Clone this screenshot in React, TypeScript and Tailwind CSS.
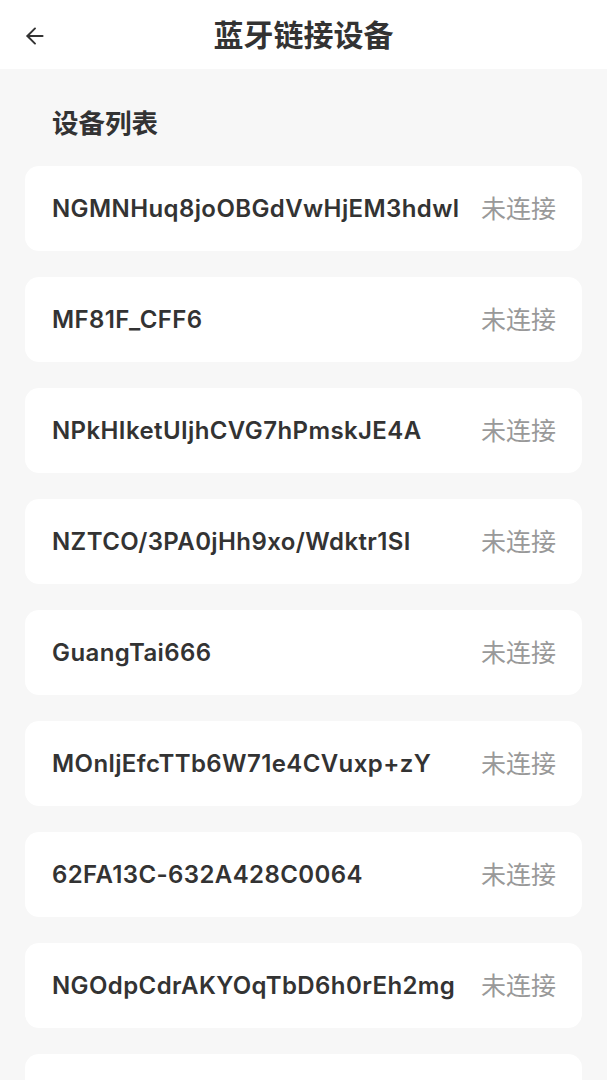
import { ArrowLeft } from "lucide-react";

const devices = [
  "NGMNHuq8joOBGdVwHjEM3hdwl",
  "MF81F_CFF6",
  "NPkHIketUIjhCVG7hPmskJE4A",
  "NZTCO/3PA0jHh9xo/Wdktr1SI",
  "GuangTai666",
  "MOnljEfcTTb6W71e4CVuxp+zY",
  "62FA13C-632A428C0064",
  "NGOdpCdrAKYOqTbD6h0rEh2mg",
  "",
];

const font = { fontFamily: '"Noto Sans", "Noto Sans CJK SC", sans-serif' };
const nameFont = { fontFamily: 'Inter, "Noto Sans CJK SC", sans-serif' };

export default function App() {
  return (
    <div className="h-[1080px] overflow-hidden bg-[#f7f7f7] text-[#333]" style={font}>
      {/* Header */}
      <div className="relative flex h-[69px] items-center justify-center bg-white">
        <button className="absolute left-[22px] top-[23px] text-[#333]">
          <ArrowLeft size={26} strokeWidth={1.8} />
        </button>
        <h1 className="text-[30px] font-bold leading-none">蓝牙链接设备</h1>
      </div>

      <div className="px-[25px]">
        <h2 className="pl-[27px] pt-[40px] pb-[29px] text-[26.5px] font-bold leading-[28px]">设备列表</h2>

        <div className="flex flex-col gap-[26px]">
          {devices.map((name, i) => (
            <div
              key={i}
              className="flex h-[85px] items-center justify-between rounded-[14px] bg-white pl-[27px] pr-[26px]"
            >
              <span className="truncate text-[24px] font-semibold tracking-[0.4px]" style={nameFont}>
                {name}
              </span>
              {name && <span className="ml-3 shrink-0 text-[25px] text-[#999]">未连接</span>}
            </div>
          ))}
        </div>
      </div>
    </div>
  );
}
